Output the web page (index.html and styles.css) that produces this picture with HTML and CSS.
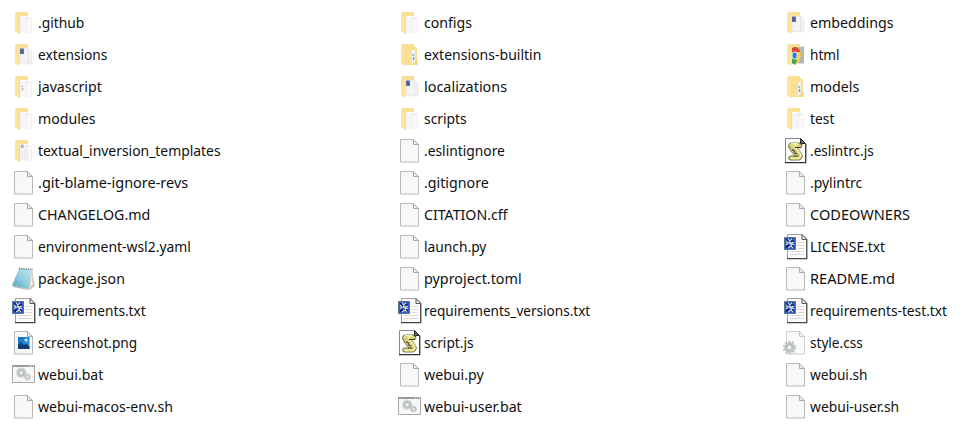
FILE: index.html
```html
<!DOCTYPE html>
<html lang="en">
<head>
<meta charset="utf-8">
<title>Files</title>
<link rel="stylesheet" href="styles.css">
</head>
<body>
<svg class="defs" width="0" height="0">
<defs>
<linearGradient id="fold" x2="1" y2="0"><stop offset="0" stop-color="#fde7a0"/><stop offset="1" stop-color="#fbdf8a"/></linearGradient>
<linearGradient id="paper" x2="1" y2="1"><stop offset="0" stop-color="#f4f5f6"/><stop offset="1" stop-color="#fbfbfb"/></linearGradient>
<linearGradient id="note" x1="0" y1="1" x2="1" y2="0"><stop offset="0" stop-color="#4b9fb9"/><stop offset=".45" stop-color="#8ecbdd"/><stop offset="1" stop-color="#c9e8f0"/></linearGradient>
<linearGradient id="sky" x2="1" y2="1"><stop offset="0" stop-color="#1767bd"/><stop offset="1" stop-color="#37a6ed"/></linearGradient>
<symbol id="base" viewBox="0 0 24 24"><path d="M3.500 1.500H16V5H8v17.500L3.500 20.800Z" fill="url(#fold)"/><path d="M4 2h12" stroke="#f3d77f" stroke-width="1"/></symbol>
<symbol id="front" viewBox="0 0 24 24"><path d="M3 2.500 8 5v18L3 20.500Z" fill="#fde49b"/><path d="M7.600 5v17.500" stroke="#f3d58a" stroke-width=".7"/></symbol>
<symbol id="folder" viewBox="0 0 24 24"><use href="#base"/><path d="M8 6 15 5l4 2v14.500H8Z" fill="#f6f6f6"/><path d="M14.500 8 19.500 7v14h-5Z" fill="#fafafa" stroke="#e8e8e8" stroke-width=".6"/><path d="m13 6 2 2 2-1" fill="none" stroke="#ddd" stroke-width=".7"/><use href="#front"/></symbol>
<symbol id="folder-doc" viewBox="0 0 24 24"><use href="#base"/><path d="M8 5.500 17 5l3 3v13L8 20.500Z" fill="#f3f4f6" stroke="#ddd" stroke-width=".6"/><path d="M16.500 6v14" stroke="#dedede" stroke-width=".7"/><path d="M8 5.500h4V11H8Z" fill="#6570a5"/><path d="M8.500 6.500h1.200v1.200H8.500Zm1.200 2H11v1H9.700Z" fill="#293780"/><path d="M3 2.500 7 4.500v18L3 20.500Z" fill="#fde49b"/></symbol>
<symbol id="folder-js" viewBox="0 0 24 24"><use href="#folder"/><path d="M9.500 11.500H11m-1 2h1.500m-2 1.500H11" stroke="#aaa999" stroke-width="1"/></symbol>
<symbol id="folder-text" viewBox="0 0 24 24"><use href="#folder"/><path d="M9 5.500h2.500V9H9Z" fill="#9dadbc"/><path d="M10 12v7m3-10v11m3-10v9" stroke="#dedede" stroke-width=".8"/></symbol>
<symbol id="folder-sub" viewBox="0 0 24 24"><use href="#base"/><path d="M8 4 16 3l3 2v17H8Z" fill="#f8dc8b"/><path d="M13.500 7.500 18 6v14l-4.500 1Z" fill="#f0f5f6"/><path d="M15 11v2m.5 1v3" stroke="#5caac1" stroke-width="1.300"/><path d="M17.300 7v13" stroke="#b9ccd4" stroke-width=".7"/><path d="M8 5.500 13.500 4v18H8Z" fill="#fbe095"/><path d="M18 17h1.800v5H14Z" fill="#f5d881"/><use href="#front"/></symbol>
<symbol id="folder-html" viewBox="0 0 24 24"><use href="#base"/><path d="M8 5 16 4l4-1v17.500H8Z" fill="#b6b7ba"/><path d="M8 5q5-3 8 3l1 4H8Z" fill="#df4737"/><path d="M13 9h4q0 10-6 13Z" fill="#f9ce42"/><path d="M8 13 13 17l-2 5-3-2Z" fill="#3aa45b"/><ellipse cx="10.600" cy="12.500" rx="2.900" ry="4" fill="#fff"/><ellipse cx="10.600" cy="12.500" rx="2.100" ry="3.200" fill="#2879e0"/><path d="M3 2.500 7 4.500v18L3 20.500Z" fill="#fde49b"/></symbol>
<symbol id="file" viewBox="0 0 24 24"><path d="M2.500.5h13l5 5v17.500h-18Z" fill="url(#paper)" stroke="#b8b8b8" stroke-width="1"/><path d="M15.500.5v5h5Z" fill="#eee" stroke="#a9a9a9" stroke-width="1"/></symbol>
<symbol id="txt" viewBox="0 0 24 26"><path d="M3.500.5h14.500l4.500 4.500v19.500h-19Z" fill="#fcfcfc" stroke="#a0a0a0"/><path d="M3 24.700h19.800V5.500" fill="none" stroke="#444" stroke-width="1.200"/><path d="M18 .5 22.800 5.500H18Z" fill="#eee" stroke="#555"/><path d="M13 8.500h7m-7 3h7m-7 3h7M6 17.500h14m-14 3h14" stroke="#dadada"/><path d="M.5 3.500h11v12H.5Z" fill="#3452c9" stroke="#54758f"/><path d="M2 5h3v3H2Zm5 1h3v3H7ZM2 11h3v3H2Zm5 0h3v3H7Z" fill="#151f88"/><path d="M4 4.500 5.500 7 8 5m2 3-3 1 3 2m-1 3-2-2-3 2m-2-3 2-2-2-2m3 1 3 3" fill="none" stroke="#d3e2ce" stroke-width="1.100"/><path d="M5 9h2m0 3h1" stroke="#e8dc75" stroke-width="1.300"/></symbol>
<symbol id="js" viewBox="0 0 24 26"><path d="M1.500.5h15l5 5v19h-20Z" fill="#fefefe" stroke="#888"/><path d="M1 24.600h20.800V6" fill="none" stroke="#333" stroke-width="1.200"/><path d="M16.500.5v5h5Z" fill="#666" stroke="#222"/><path d="M7.500 5H15q3 0 3 2.500T15.500 9.500H13l4.500 6q2 3-.5 5.500-1 1-3 1H7q-2.500 0-2.500-2T7 18h4L6 12V9.500H4.800Q4 5 7.500 5Z" fill="#d4d377" stroke="#69683e" stroke-width=".9"/><path d="M7 5.800h7q-4 1-3 3l5.500 7q1 3-2 4.700H7" fill="none" stroke="#f5f3af" stroke-width="1.500"/><path d="M11 9.500h6m-9 2 3 2m-1 1 3 1.500M10 18h4.500M16 5.500l2 1" fill="none" stroke="#3c3c2b" stroke-width="1.200"/></symbol>
<symbol id="json" viewBox="0 0 24 24"><path d="m20 3 2.500 16-5 4-1-2Z" fill="#bdb39e"/><path d="m20 4 1 14-4 4Z" fill="#eeece2"/><path d="M7 1.500 20.500 3 16.500 22 0 18.500Z" fill="url(#note)"/><path d="M0 18.500 16.500 22v1L1 20Z" fill="#a9b9b7"/><path d="M7 1.500 21 2.500" stroke="#65777a" stroke-width="1.500" stroke-dasharray="1 .8"/></symbol>
<symbol id="png" viewBox="0 0 24 24"><use href="#file"/><path d="M6 6h11.500v12H6Z" fill="url(#sky)"/><path d="m6 14 3-3 3 3 2-1.500 3.500 3V18H6Z" fill="#123c75"/><circle cx="14" cy="9" r="1.500" fill="#d7effb"/></symbol>
<symbol id="cog" viewBox="-8 -8 16 16"><circle r="6.300" fill="none" stroke="#b9bdc0" stroke-width="1.800" stroke-dasharray="2 1.960"/><circle r="4.200" fill="#f3f4f5" stroke="#bec2c5" stroke-width="2.800"/><circle r="2.500" fill="#f5f6f6" stroke="#a2a7ab" stroke-width=".7"/></symbol>
<symbol id="bat" viewBox="0 0 24 24"><path d="M.5 2.500h22v17H.5Z" fill="#f6f7f7" stroke="#a5a9ac"/><path d="M0 3h23" stroke="#92979b" stroke-width="1.800"/><path d="M17 3h1m1 0h1m1 0h1" stroke="#e8e8e8"/><use href="#cog" x="3.500" y="4" width="11.500" height="11.500"/><use href="#cog" x="11.500" y="10" width="8" height="8"/></symbol>
<symbol id="css" viewBox="0 0 24 24"><g opacity=".65"><use href="#file"/></g><use href="#cog" x="-2" y="9" width="15" height="15"/></symbol>
</defs>
</svg>
<main class="files" id="files"></main>
<script src="files.js"></script>
</body>
</html>
```
FILE: styles.css
```css
* { box-sizing: border-box; }
body { margin: 0; background: #fff; color: #101010; }
.defs { display: block; }
.files {
  display: grid;
  grid-template-columns: repeat(3, 386px);
  grid-auto-rows: 32px;
  width: 972px;
  height: 439px;
  padding: 7px 0 0 12px;
  overflow: hidden;
}
.file { display: flex; align-items: center; gap: 2px; }
.icon { width: 24px; height: 24px; flex: none; overflow: visible; }
.icon.tall { height: 26px; }
symbol { overflow: visible; }
.name {
  padding-bottom: 2px;
  font: 15px/22px "Noto Sans", "Open Sans", sans-serif;
  white-space: nowrap;
  transform-origin: left center;
}
```
FILE: files.js
```js
// Each entry: file name, icon id, label width in pixels.
const files = [
  ['.github', 'folder', 46], ['configs', 'folder', 48], ['embeddings', 'folder-doc', 83.5],
  ['extensions', 'folder-doc', 69.5], ['extensions-builtin', 'folder-sub', 117], ['html', 'folder-html', 30],
  ['javascript', 'folder-js', 63.5], ['localizations', 'folder-doc', 83.5], ['models', 'folder-sub', 49.5],
  ['modules', 'folder', 57.5], ['scripts', 'folder', 42.5], ['test', 'folder', 24],
  ['textual_inversion_templates', 'folder-text', 182.5], ['.eslintignore', 'file', 81], ['.eslintrc.js', 'js', 63.5],
  ['.git-blame-ignore-revs', 'file', 150.5], ['.gitignore', 'file', 64.5], ['.pylintrc', 'file', 52],
  ['CHANGELOG.md', 'file', 112], ['CITATION.cff', 'file', 83], ['CODEOWNERS', 'file', 100],
  ['environment-wsl2.yaml', 'file', 153], ['launch.py', 'file', 62.5], ['LICENSE.txt', 'txt', 75.5],
  ['package.json', 'json', 86.5], ['pyproject.toml', 'file', 97.5], ['README.md', 'file', 84.5],
  ['requirements.txt', 'txt', 107.5], ['requirements_versions.txt', 'txt', 166.5], ['requirements-test.txt', 'txt', 137.5],
  ['screenshot.png', 'png', 99], ['script.js', 'js', 49.5], ['style.css', 'css', 52.5],
  ['webui.bat', 'bat', 65.5], ['webui.py', 'file', 59.5], ['webui.sh', 'file', 57.5],
  ['webui-macos-env.sh', 'file', 134.5], ['webui-user.bat', 'bat', 97.5], ['webui-user.sh', 'file', 89.5]
];
const list = document.getElementById('files');
for (const [name, icon, width] of files) {
  const tall = icon === 'txt' || icon === 'js';
  list.insertAdjacentHTML('beforeend',
    `<div class="file"><svg class="icon${tall ? ' tall' : ''}"><use href="#${icon}"/></svg><span class="name">${name}</span></div>`);
  const label = list.lastElementChild.lastElementChild;
  label.style.transform = `scaleX(${width / label.offsetWidth})`;
}
```
